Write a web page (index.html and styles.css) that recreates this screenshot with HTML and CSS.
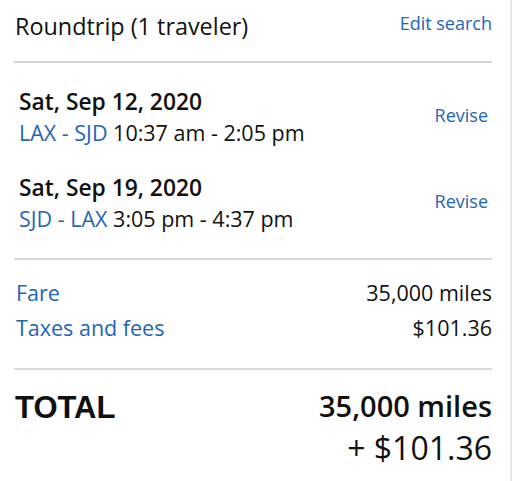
FILE: index.html
```html
<!DOCTYPE html>
<html>
<head>
<meta charset="utf-8">
<link rel="stylesheet" href="styles.css">
</head>
<body>
<div class="panel">
  <div class="header">
    <div class="title">Roundtrip (1 traveler)</div>
    <a class="link edit">Edit search</a>
  </div>
  <div class="flights">
    <div class="flight">
      <div class="info">
        <div class="date">Sat, Sep 12, 2020</div>
        <div class="route"><span class="link">LAX - SJD</span> 10:37 am - 2:05 pm</div>
      </div>
      <a class="link revise">Revise</a>
    </div>
    <div class="flight">
      <div class="info">
        <div class="date">Sat, Sep 19, 2020</div>
        <div class="route"><span class="link">SJD - LAX</span> 3:05 pm - 4:37 pm</div>
      </div>
      <a class="link revise">Revise</a>
    </div>
  </div>
  <div class="costs">
    <div class="cost"><span class="link">Fare</span><span>35,000 miles</span></div>
    <div class="cost"><span class="link">Taxes and fees</span><span>$101.36</span></div>
  </div>
  <div class="total">
    <div class="total-label">TOTAL</div>
    <div class="total-value">
      <div class="miles">35,000 miles</div>
      <div class="cash">+ $101.36</div>
    </div>
  </div>
</div>
</body>
</html>
```
FILE: styles.css
```css
html, body {
  margin: 0;
  padding: 0;
  background: #fff;
}
body {
  font-family: "Open Sans", "Liberation Sans", sans-serif;
  color: #111;
}
.panel {
  width: 478px;
  height: 481px;
  padding: 0 18px 0 14px;
  border-right: 2px solid #e6e6e6;
  box-sizing: content-box;
}
.link {
  color: #1f65b3;
}
.header {
  display: flex;
  justify-content: space-between;
  align-items: flex-start;
  height: 61px;
  border-bottom: 2px solid #d3d3d3;
}
.title {
  font-size: 23.4px;
  line-height: 32px;
  margin-top: 10px;
  padding-left: 1px;
}
.edit {
  font-size: 18px;
  line-height: 24px;
  margin-top: 11px;
}
.flights {
  padding: 24px 0 23px;
  border-bottom: 2px solid #d9d9d9;
}
.flight {
  display: flex;
  justify-content: space-between;
  align-items: center;
  padding-left: 5px;
}
.flight + .flight {
  margin-top: 24px;
}
.date {
  font-weight: 600;
  font-size: 22.8px;
  line-height: 30px;
}
.route {
  font-size: 21.5px;
  line-height: 32px;
}
.revise {
  font-size: 18px;
  line-height: 24px;
  padding-right: 4px;
  margin-top: -7px;
}
.costs {
  padding: 15px 0 23px 2px;
  border-bottom: 2px solid #d9d9d9;
}
.cost {
  display: flex;
  justify-content: space-between;
  font-size: 21.5px;
  line-height: 35px;
}
.total {
  display: flex;
  justify-content: space-between;
  align-items: flex-start;
  padding-top: 15px;
}
.total-label {
  font-family: "Liberation Sans", Arial, sans-serif;
  font-weight: 700;
  font-size: 31px;
  line-height: 36px;
  margin-top: 5px;
  padding-left: 1px;
}
.total-value {
  text-align: right;
  line-height: 42px;
}
.miles {
  font-weight: 600;
  font-size: 29px;
}
.cash {
  font-size: 32px;
}
```
